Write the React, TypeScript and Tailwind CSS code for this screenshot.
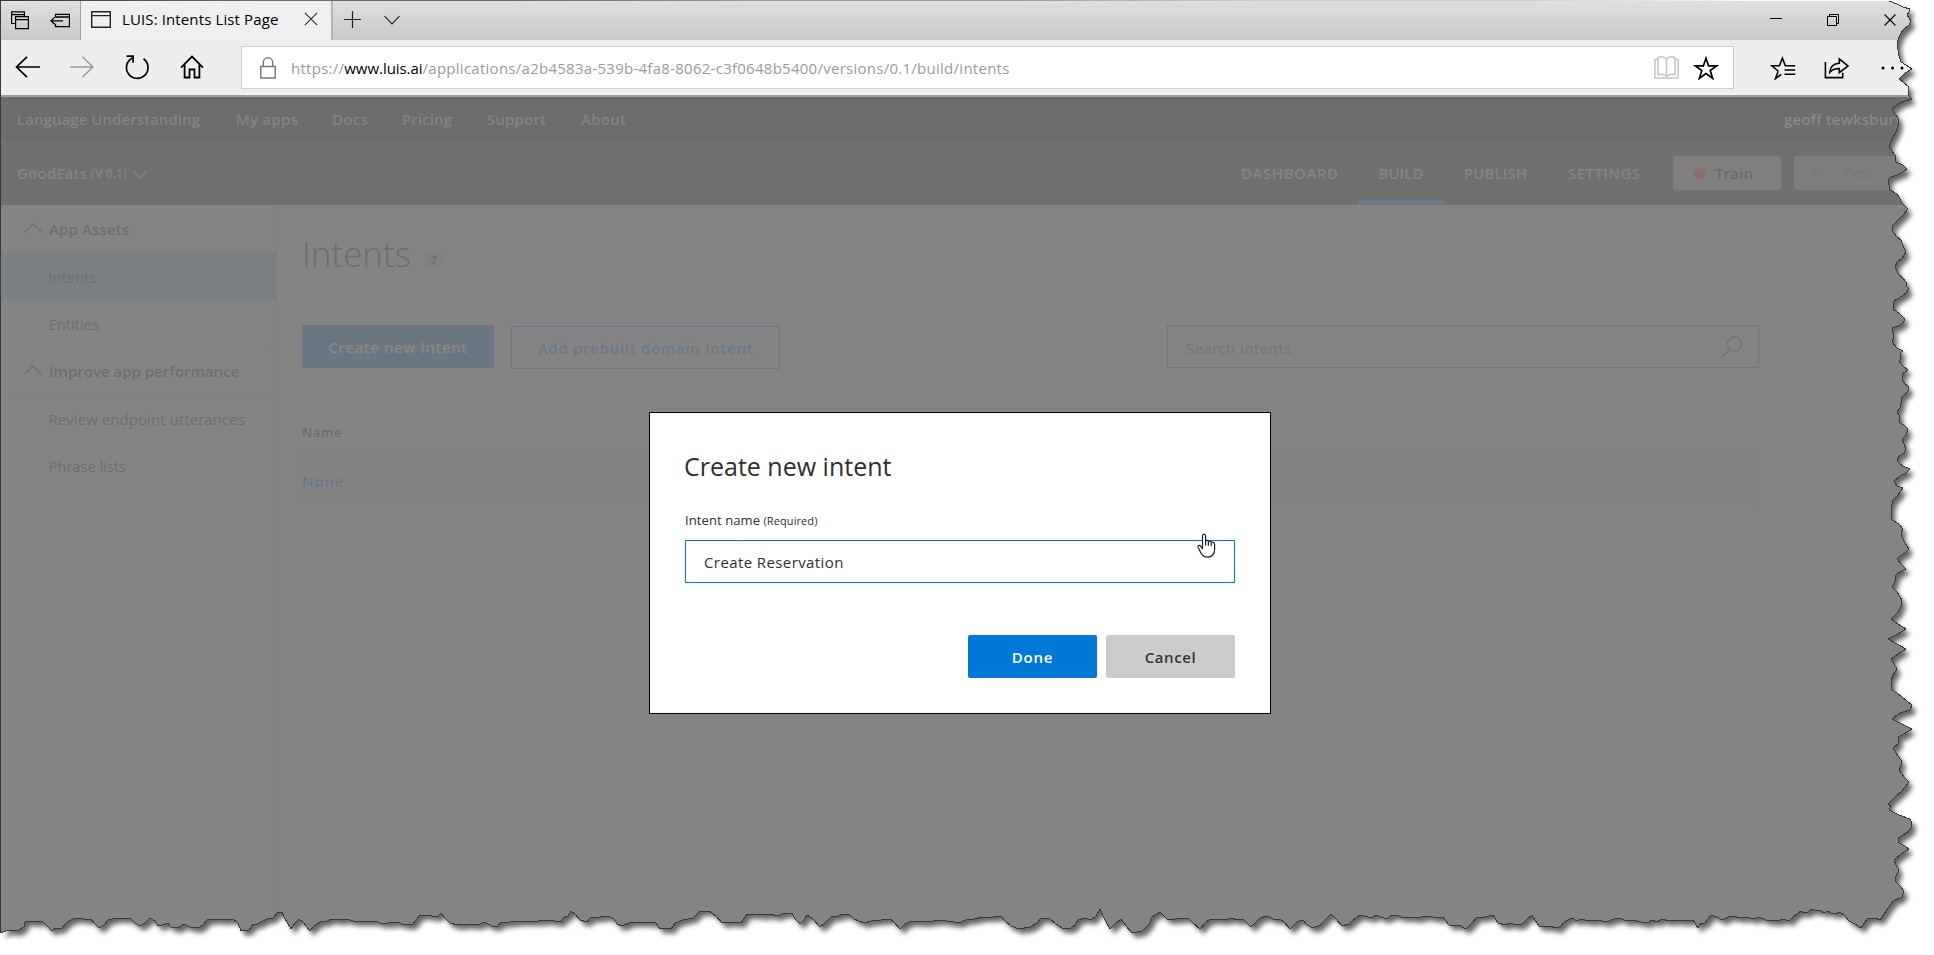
import type { ReactNode } from "react";

const RIGHT_EDGE =
  "1889,1 1892,2 1899,5 1903,7 1910,9 1909,12 1907,15 1909,18 1911,21 1909,25 1904,29 1901,33 1899,37 1898,40 1897,45 1898,50 1899,56 1901,62 1906,65 1912,69 1905,73 1899,79 1903,82 1909,87 1908,92 1909,96 1912,99 1905,101 1900,103 1896,106 1892,109 1895,114 1899,119 1898,126 1896,132 1892,139 1889,146 1892,151 1895,155 1896,162 1903,165 1907,169 1903,172 1897,175 1891,177 1888,180 1889,185 1890,190 1897,194 1899,197 1902,203 1908,209 1903,215 1897,221 1892,226 1893,232 1897,237 1901,240 1903,246 1906,252 1902,258 1897,262 1895,267 1899,275 1903,278 1906,282 1906,286 1909,289 1906,293 1902,296 1897,299 1893,302 1894,305 1893,309 1900,314 1905,319 1903,323 1898,326 1892,328 1893,333 1894,337 1892,342 1897,348 1903,351 1900,354 1901,358 1899,362 1903,366 1908,370 1905,372 1902,374 1903,381 1905,384 1908,386 1909,390 1905,394 1902,397 1901,403 1900,408 1897,412 1900,416 1899,422 1904,425 1908,429 1906,435 1902,439 1904,444 1906,449 1904,453 1899,456 1897,461 1900,464 1903,466 1910,469 1906,473 1900,476 1894,481 1897,486 1903,488 1898,495 1893,500 1891,508 1892,520 1899,524 1903,529 1901,532 1902,537 1905,543 1909,549 1905,553 1900,556 1897,559 1901,564 1906,569 1900,572 1896,575 1895,581 1892,587 1897,592 1902,600 1901,606 1898,612 1891,619 1898,624 1906,629 1898,634 1888,639 1897,644 1906,649 1898,654 1891,659 1894,664 1897,669 1893,675 1891,680 1892,690 1897,693 1902,697 1907,701 1912,705 1910,710 1903,712 1898,714 1892,719 1902,724 1912,729 1904,734 1898,737 1899,743 1893,748 1896,753 1899,757 1902,762 1899,770 1904,777 1909,782 1905,787 1902,791 1895,797 1888,804 1891,806 1889,810 1899,815 1910,819 1912,823 1911,828 1909,831 1903,835 1898,838 1899,843 1905,846 1909,849 1901,854 1894,860 1896,865 1899,870 1896,876 1895,881 1900,886 1904,891 1902,897 1893,901 1886,911 1880,920 1875,918 1867,919";

const BOTTOM_EDGE =
  "1861,928 1855,924 1849,921 1845,916 1840,912 1835,914 1831,913 1828,911 1824,913 1820,910 1816,911 1812,909 1808,912 1804,913 1801,911 1794,916 1789,921 1783,919 1777,921 1766,920 1759,917 1753,919 1747,917 1740,918 1733,916 1728,917 1722,920 1717,917 1711,915 1705,923 1701,923 1698,928 1693,920 1684,921 1676,920 1669,921 1662,919 1657,922 1652,920 1648,923 1641,922 1632,920 1626,921 1620,918 1614,919 1606,922 1598,920 1589,921 1581,919 1577,921 1572,918 1564,922 1561,926 1557,928 1548,926 1539,926 1535,920 1532,915 1527,919 1522,924 1516,925 1510,923 1505,925 1498,923 1493,915 1485,917 1477,917 1472,923 1466,929 1459,925 1449,925 1443,917 1436,918 1430,916 1424,916 1418,918 1410,917 1401,917 1397,915 1392,915 1388,918 1384,918 1376,915 1372,918 1368,917 1360,915 1353,920 1349,924 1342,926 1336,919 1331,914 1326,919 1320,925 1313,928 1307,925 1304,921 1300,920 1295,924 1290,929 1284,922 1280,919 1273,919 1267,916 1260,918 1256,922 1251,927 1247,923 1243,919 1237,920 1232,918 1224,920 1216,919 1209,920 1205,923 1200,929 1193,923 1188,918 1182,918 1175,919 1167,919 1160,912 1152,917 1149,924 1142,931 1132,933 1126,926 1121,919 1116,923 1110,929 1105,920 1100,909 1096,916 1091,920 1085,918 1078,920 1075,925 1071,928 1062,928 1056,924 1050,919 1041,918 1037,923 1030,927 1019,929 1011,926 1005,921 1001,916 993,917 983,917 974,919 966,920 958,923 954,922 940,920 926,922 911,921 905,924 900,929 894,922 890,919 881,920 871,921 864,923 854,919 850,915 843,914 838,916 831,917 824,924 820,927 813,919 807,915 804,920 800,924 795,919 792,913 785,913 777,916 770,914 762,915 755,914 747,914 741,923 736,922 728,922 722,923 716,916 709,911 700,911 693,918 683,920 675,923 671,929 665,928 660,929 656,923 648,922 640,922 631,922 622,926 617,924 614,919 608,916 600,917 590,918 587,922 580,920 575,914 571,911 568,916 563,918 561,922 555,921 547,920 538,921 531,921 520,921 510,922 500,923 498,926 492,926 484,922 478,925 468,924 457,925 450,923 445,918 441,913 437,917 427,915 420,915 416,920 412,925 402,924 398,922 388,923 380,923 376,921 369,921 360,921 353,921 347,919 340,920 331,919 327,921 320,922 314,926 310,931 304,923 299,919 295,923 291,929 284,917 282,912 278,912 273,918 267,919 261,922 257,924 253,924 249,930 241,931 238,923 233,919 225,920 216,919 207,920 203,925 198,928 190,927 184,924 178,928 171,927 168,923 162,925 158,926 155,921 150,918 145,923 140,926 135,923 131,919 124,918 116,918 108,920 104,925 99,928 94,923 91,919 86,920 80,918 73,919 67,922 61,929 56,928 52,931 46,925 42,921 36,922 29,921 25,922 24,927 17,931 8,930 1,933";

const EDGE = `${RIGHT_EDGE} ${BOTTOM_EDGE}`;

function Icon({ w, h, className = "", sw = 1.5, children }: { w: number; h: number; className?: string; sw?: number; children: ReactNode }) {
  return (
    <svg width={w} height={h} viewBox={`0 0 ${w} ${h}`} fill="none" stroke="currentColor" strokeWidth={sw} className={`block shrink-0 ${className}`}>
      {children}
    </svg>
  );
}

function TabStrip() {
  return (
    <div className="flex h-[39px] bg-linear-to-b from-[#e0dfe0] to-[#c9c9c8] text-black">
      <div className="flex w-[80px] gap-[21px] border-r border-[#a3a3a3] pl-[10px] pt-[10px]">
        <Icon w={18} h={19} sw={1.2}>
          <path d="M4.5 12.5H.6V.9h12.8v4M.6 3.6h12.8" />
          <path d="M4.6 5.6h12.8v12H4.6zM4.6 8.6h12.8" />
        </Icon>
        <Icon w={20} h={19} sw={1.3}>
          <path d="M5.5 6.5V3.4h14v12.2h-14v-2.8M5.5 6h14M1 9.8h12M4.6 6.4 1 9.8l3.6 3.4" />
        </Icon>
      </div>
      <div className="flex w-[252px] items-center border-r-2 border-[#b5b5b5] bg-[#efefef] pb-[3px] pl-[10px]">
        <Icon w={20} h={17} sw={1.4} className="text-[#222]">
          <path d="M.7.7h18.6v15.6H.7zM.7 4.6h18.6" />
        </Icon>
        <span className="ml-[11px] w-[182px] whitespace-nowrap tracking-[0.12px]">LUIS: Intents List Page</span>
        <Icon w={14} h={14} sw={1.2} className="text-[#333]">
          <path d="M.8.8l12.4 12.4M13.2.8.8 13.2" />
        </Icon>
      </div>
      <div className="flex flex-1 items-center pb-[2px] pl-[11px]">
        <Icon w={17} h={17} sw={1.2} className="text-[#222]">
          <path d="M8.5 0v17M0 8.5h17" />
        </Icon>
        <Icon w={16} h={10} sw={1.2} className="ml-[23px] text-[#222]">
          <path d="M.6 1.2 8 8.8l7.4-7.6" />
        </Icon>
        <Icon w={12} h={11} sw={1} className="ml-[1370px]">
          <path d="M0 4.5h12" />
        </Icon>
        <Icon w={12} h={12} sw={1} className="ml-[45px]">
          <path d="M.5 2.5h9v9h-9zM2.5 2.5v-2h9v9h-2" />
        </Icon>
        <Icon w={12} h={12} sw={1.1} className="ml-[45px]">
          <path d="m.5.5 11 11M11.500.5l-11 11" />
        </Icon>
      </div>
    </div>
  );
}

function AddressBar() {
  return (
    <div className="flex h-[57px] items-start border-b-2 border-[#a0a0a0] bg-[#eeeeee] pt-[6px] text-black">
      <div className="flex h-[43px] w-[240px] items-center pb-px pl-[14px]">
        <Icon w={25} h={22} sw={1.7}>
          <path d="M1.500 11H25M12 .8 1.500 11 12 21.200" />
        </Icon>
        <Icon w={24} h={22} sw={1.5} className="ml-[30px] text-[#999]">
          <path d="M0 11h22.500M12.500.8 22.800 11 12.500 21.200" />
        </Icon>
        <Icon w={26} h={26} sw={1.7} className="ml-[30px]">
          <path d="M19.500 4.700A10.800 10.800 0 1 1 8.300 3.900M2.500 2.200h6.600v6.500" />
        </Icon>
        <Icon w={24} h={24} sw={1.8} className="ml-[30px]">
          <path d="M1 12.600 12 1.600l11 11M4.600 9.500v13h4.900v-8h5v8h4.900v-13" />
        </Icon>
      </div>
      <div className="flex h-[43px] w-[1493px] items-center border border-[#cfcfcf] bg-white">
        <Icon w={16} h={22} sw={1.4} className="ml-[18px] text-[#777]">
          <path d="M.8 9.500h14.400v11.500H.8zM3.300 9.500V5.500a4.700 4.700 0 0 1 9.400 0v4" />
        </Icon>
        <span className="ml-[15px] w-[1363px] whitespace-nowrap tracking-[0.265px] text-[#9a9a9a]">
          https://<span className="tracking-[-0.05px] text-black">www.luis.ai</span>/applications/a2b4583a-539b-4fa8-8062-c3f0648b5400/versions/0.1/build/intents
        </span>
        <Icon w={25} h={23} sw={1.5} className="text-[#c4c4c4]">
          <path d="M12.500 3.200C10.500.6 6.500.6 4 1.500v17.300c3-.9 6.500-.7 8.500 1.500 2-2.200 5.500-2.400 8.500-1.500V1.500c-2.500-.9-6.500-.9-8.500 1.700zM12.500 3.200v17M4 3.500H.9v18.400h23.200V3.500H21" />
        </Icon>
        <Icon w={26} h={24} sw={1.7} className="ml-[14px]">
          <path d="m13 2.200 2.600 7.600h8.100l-6.500 4.800 2.500 7.800-6.700-4.800-6.700 4.800 2.500-7.800-6.500-4.800h8.100z" />
        </Icon>
      </div>
      <div className="flex h-[43px] flex-1 items-center pl-[36px]">
        <Icon w={26} h={24} sw={1.6}>
          <path d="M8.200 15 1.800 9.800h7.600l3-7.600 2.900 7.600h9.900M8.200 15l-2.700 7.600 5.800-4.300M14.500 14h10.700M14.500 18.300h10.700" />
        </Icon>
        <Icon w={26} h={24} sw={1.6} className="ml-[28px]">
          <path d="M1.400 6v15.600h17.300v-4.800M5.800 16.300C6.200 11 9 7.600 15.300 7.300V3l8.700 7-8.700 6.600v-4.100c-4.200-.1-7 .9-9.500 3.800z" />
        </Icon>
        <svg width="24" height="4" viewBox="0 0 24 4" className="ml-[31px] block shrink-0" fill="#000">
          <circle cx="2" cy="2" r="1.500" />
          <circle cx="11.500" cy="2" r="1.500" />
          <circle cx="21" cy="2" r="1.500" />
        </svg>
      </div>
    </div>
  );
}

function SiteHeader() {
  return (
    <header className="font-semibold text-[#848484]">
      <nav className="flex h-[44px] items-center whitespace-nowrap bg-[#6d6d6d] pl-[16px]">
        <span className="w-[219px] tracking-[0.06px]">Language Understanding</span>
        <span className="w-[96px] tracking-[0.26px]">My apps</span>
        <span className="w-[70px] tracking-[0.3px]">Docs</span>
        <span className="w-[85px] tracking-[0.11px]">Pricing</span>
        <span className="w-[94px] tracking-[0.16px]">Support</span>
        <span className="w-[1203px] tracking-[0.28px]">About</span>
        <span className="tracking-[0.15px] text-[#888]">geoff tewksbury</span>
      </nav>
      <nav className="flex h-[64px] items-center whitespace-nowrap bg-[#707070] pl-[16px]">
        <span className="w-[74px] tracking-[0.17px]">GoodEats</span>
        <span className="w-[36px] pt-[2px] text-[12px] tracking-[0.1px]">(V 0.1)</span>
        <Icon w={14} h={8} sw={1.5} className="ml-[6px] mt-[3px]">
          <path d="M.6.800 7 7.200 13.400.800" />
        </Icon>
        <div className="ml-[1079px] flex h-full">
          <span className="flex w-[132px] items-center pl-[15px] tracking-[0.55px]">DASHBOARD</span>
          <span className="flex w-[86px] items-center justify-center border-b-6 border-[#6a7883] pt-[6px] tracking-[0.06px]">BUILD</span>
          <span className="flex w-[103px] items-center pl-[20px] tracking-[0.08px]">PUBLISH</span>
          <span className="flex w-[110px] items-center pl-[21px] tracking-[0.42px]">SETTINGS</span>
        </div>
        <div className="ml-[16px] flex h-[34px] w-[108px] items-center rounded-[3px] bg-[#7f7f7f] pl-[21px] text-[#6a6a6a]">
          <span className="mr-[10px] size-[11px] rounded-full bg-[#8d6b6b]" />
          <span className="tracking-[0.16px]">Train</span>
        </div>
        <div className="ml-[13px] flex h-[34px] flex-1 items-center rounded-l-[3px] bg-[#7d7d7d] pl-[18px] text-[#777]">
          <Icon w={17} h={14} sw={1}>
            <path d="M0 7h17M8 .6.900 7 8 13.400" />
          </Icon>
          <span className="ml-[14px] pb-[2px]">Test</span>
        </div>
      </nav>
    </header>
  );
}

function SideGroup({ title, width }: { title: string; width: string }) {
  return (
    <div className="mx-[8px] flex h-[47px] items-center border-y border-[#7f7f7f] font-semibold">
      <Icon w={18} h={10} sw={1.3} className="ml-[15px] mb-px">
        <path d="M.600 9.200 9 1l8.400 8.200" />
      </Icon>
      <span className={`ml-[7px] whitespace-nowrap ${width}`}>{title}</span>
    </div>
  );
}

function Sidebar() {
  const item = "flex items-center whitespace-nowrap pl-[47.500px]";
  return (
    <aside className="w-[276px] shrink-0 border-r border-[#808080] text-[#6e6e6e]">
      <SideGroup title="App Assets" width="tracking-[0.12px]" />
      <div className={`${item} h-[48px] bg-[#7b7f82] pt-[2px] tracking-[-0.1px]`}>Intents</div>
      <div className={`${item} h-[47px] tracking-[-0.15px]`}>Entities</div>
      <SideGroup title="Improve app performance" width="tracking-[0.01px]" />
      <div className={`${item} h-[48px] pt-px tracking-[0.06px]`}>Review endpoint utterances</div>
      <div className={`${item} h-[47px] tracking-[-0.17px]`}>Phrase lists</div>
    </aside>
  );
}

function IntentsPage() {
  return (
    <main className="flex-1 pl-[25px] pt-[29px] text-[#6c6c6c]">
      <div className="flex h-[40px] items-center">
        <h1 className="w-[123px] text-[35px] font-light leading-[40px] tracking-[-0.02px]">Intents</h1>
        <span className="mt-[11px] flex size-[18px] items-center justify-center rounded-full bg-[#808080] text-[11px] font-semibold leading-none text-[#666]">?</span>
      </div>
      <div className="mt-[51px] flex w-[1457px] font-semibold">
        <button className="h-[43px] w-[192px] rounded-[2px] bg-[#6a7780] tracking-[0.57px] text-[#878787]">Create new intent</button>
        <button className="ml-[17px] mt-px h-[43px] w-[269px] rounded-[2px] border border-[#677785] pt-px tracking-[0.72px] text-[#6c7883]">
          Add prebuilt domain intent
        </button>
        <div className="ml-auto flex h-[43px] w-[592px] items-center justify-between border border-[#757575] pl-[18px] pr-[15px] pt-[2px] font-normal text-[#747474]">
          <span className="tracking-[0.4px]">Search intents</span>
          <Icon w={23} h={23} sw={1.6}>
            <circle cx="14.500" cy="8" r="7" />
            <path d="M9.800 13.200.8 22.300" />
          </Icon>
        </div>
      </div>
      <div className="mt-[40px] w-[1457px] font-semibold">
        <div className="flex h-[47px] items-center border-b border-[#7e7e7e] text-[13px] tracking-[0.6px]">Name</div>
        <div className="flex h-[52px] items-center border-b border-[#818181] bg-[#838383] pb-px tracking-[0.75px] text-[#6b7783]">None</div>
      </div>
    </main>
  );
}

function CreateIntentDialog() {
  return (
    <div className="absolute left-[649px] top-[412px] h-[302px] w-[622px] border border-black bg-white px-[35px] pt-[36px] text-[#2f2f2f]">
      <h2 className="-ml-px text-[25px] leading-[34px]">Create new intent</h2>
      <label className="mt-[27px] flex h-[20px] items-baseline whitespace-pre text-[13px] leading-[20px] tracking-[0.09px]">
        Intent name <span className="text-[11px]">(Required)</span>
      </label>
      <div className="mt-[10px] flex h-[43px] items-center border border-[#0078d7] pl-[18px] tracking-[0.4px]">Create Reservation</div>
      <div className="mt-[52px] flex justify-end gap-[9px] font-semibold">
        <button className="h-[43px] w-[129px] rounded-[2px] bg-[#0078d7] pt-px tracking-[0.8px] text-white">Done</button>
        <button className="h-[43px] w-[129px] rounded-[2px] bg-[#cccccc] pt-px tracking-[0.6px] text-[#333]">Cancel</button>
      </div>
    </div>
  );
}

function HandCursor() {
  return (
    <svg width="20" height="26" viewBox="0 0 20 26" className="absolute left-[1197px] top-[533px]" fill="#fff" stroke="#1a1a2a" strokeWidth="1.200" strokeLinejoin="round">
      <path d="M5.500 15.500V2.800C5.500.6 8.600.6 8.600 2.800v5c.8-.7 2.400-.4 2.800.6.9-.5 2.400-.1 2.800.9 1.500-.6 3.400.2 3.400 2v5.500c0 4-2.600 7.400-7.100 7.400-3.400 0-5.300-1.700-6.800-4.700L1.100 14.500c-.7-1.800 1-2.700 2.300-1.600z" />
      <path d="M8.600 7.500v5M11.400 8.500v4.200M14.200 9.400v3.800" fill="none" />
    </svg>
  );
}

function TornEdge() {
  return (
    <svg width="1934" height="955" viewBox="0 0 1934 955" className="pointer-events-none absolute left-0 top-0">
      <defs>
        <clipPath id="outside">
          <path clipRule="evenodd" d={`M0 0H1934V955H0ZM0 0L${EDGE.split(" ").join("L")}L0 933Z`} />
        </clipPath>
        <filter id="soft" x="-5%" y="-5%" width="110%" height="110%">
          <feGaussianBlur stdDeviation="2.600" />
        </filter>
      </defs>
      <g clipPath="url(#outside)">
        <rect width="1934" height="955" fill="#fff" />
        <polygon points={`8,8 ${EDGE} 5,925`} transform="translate(4 5)" fill="#000" fillOpacity="0.6" filter="url(#soft)" />
      </g>
      <polyline points={EDGE} fill="none" stroke="#3a3a3a" strokeWidth="1" shapeRendering="crispEdges" />
    </svg>
  );
}

export default function App() {
  return (
    <div className="relative h-[955px] w-[1934px] overflow-hidden bg-white font-['Open_Sans','Noto_Sans',sans-serif] text-[15px] leading-[20px]">
      <div className="flex h-[955px] w-[1920px] flex-col overflow-hidden border-l border-t border-[#3a3a3a] bg-[#848484]">
        <TabStrip />
        <AddressBar />
        <SiteHeader />
        <div className="flex flex-1">
          <Sidebar />
          <IntentsPage />
        </div>
      </div>
      <TornEdge />
      <CreateIntentDialog />
      <HandCursor />
    </div>
  );
}
